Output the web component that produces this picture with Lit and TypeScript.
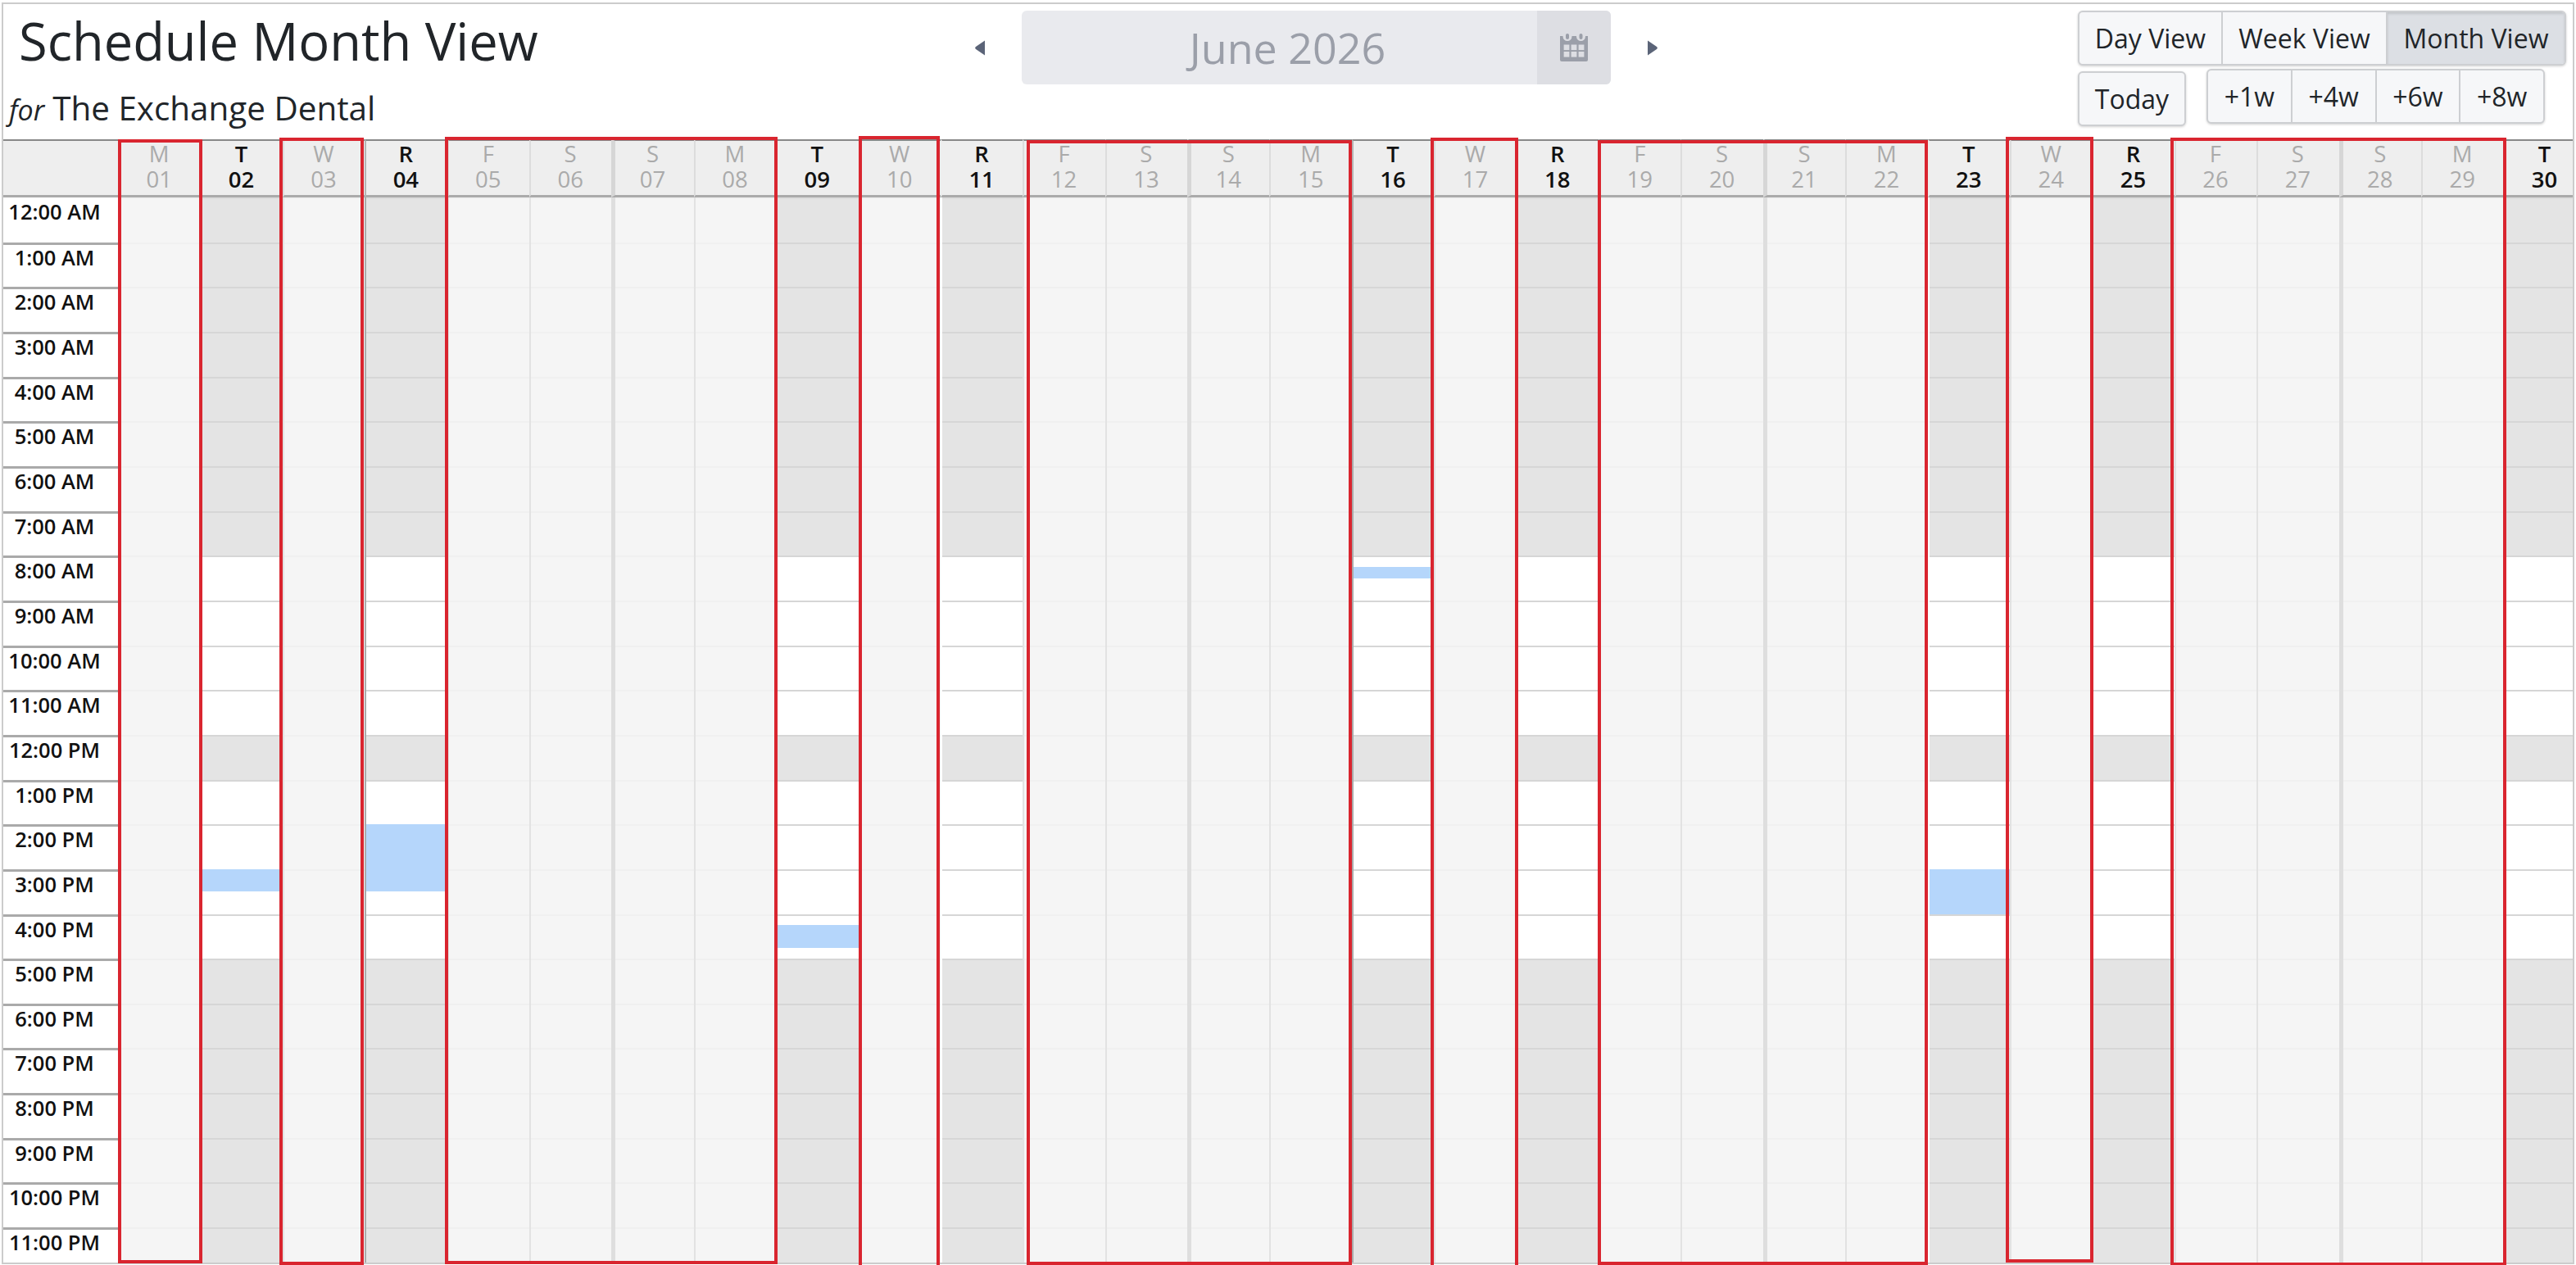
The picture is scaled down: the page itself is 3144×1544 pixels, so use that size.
import { LitElement, html, css, svg } from "lit";
import { customElement } from "lit/decorators.js";

const DAY_NAMES = ["M", "T", "W", "R", "F", "S", "S"];
const OPEN_LETTERS = new Set(["T", "R"]);
const GREY_HOURS = new Set([0, 1, 2, 3, 4, 5, 6, 7, 12, 17, 18, 19, 20, 21, 22, 23]);
const ROW_H = 54.67;
const DARK_LEFT = new Set([3, 15, 24, 29]);

const BLOCKS: Record<number, { start: number; len: number }> = {
  1: { start: 15, len: 0.5 },
  3: { start: 14, len: 1.5 },
  8: { start: 16.25, len: 0.5 },
  15: { start: 8.25, len: 0.25 },
  22: { start: 15, len: 1 },
};

const BOXES = [
  { l: 143.5, t: 170, r: 247, b: 1541.5 },
  { l: 341, t: 168, r: 443.5, b: 1543.5 },
  { l: 543, t: 166.5, r: 949, b: 1543 },
  { l: 1048, t: 166, r: 1147, b: 1548 },
  { l: 1253, t: 170.5, r: 1649.5, b: 1543.5 },
  { l: 1746, t: 167.5, r: 1853, b: 1548 },
  { l: 1949.5, t: 170.5, r: 2353.3, b: 1544 },
  { l: 2448, t: 166.5, r: 2555, b: 1541 },
  { l: 2649, t: 167.5, r: 3059, b: 1544.5 },
];

const hourLabel = (h: number) => {
  const twelve = h % 12 === 0 ? 12 : h % 12;
  return `${twelve}:00 ${h < 12 ? "AM" : "PM"}`;
};

const calendarIcon = svg`
  <path fill="#9b9fa9" d="M2 3h32a0 0 0 0 1 0 0v29a2 2 0 0 1-2 2H2a2 2 0 0 1-2-2V3a0 0 0 0 1 2 0z"/>
  <path fill="#dddee3" d="M3.5 0h11v3.5a5.5 5.5 0 0 1-11 0zM20 0h11v3.5a5.5 5.5 0 0 1-11 0z"/>
  <rect fill="#9b9fa9" x="7" y="0" width="4" height="7" rx="2"/>
  <rect fill="#9b9fa9" x="23.5" y="0" width="4" height="7" rx="2"/>
  <g fill="#dddee3">
    <rect x="4.6" y="13.5" width="6.8" height="6.6"/><rect x="13.6" y="13.5" width="6.8" height="6.6"/><rect x="22.6" y="13.5" width="6.8" height="6.6"/>
    <rect x="4.6" y="22" width="6.8" height="6.6"/><rect x="13.6" y="22" width="6.8" height="6.6"/><rect x="22.6" y="22" width="6.8" height="6.6"/>
  </g>`;

@customElement("app-root")
export class AppRoot extends LitElement {
  static styles = css`
    :host {
      display: block;
      position: relative;
      width: 3144px;
      height: 1544px;
      overflow: hidden;
      background: #fff;
      font-family: "Open Sans", "Noto Sans", sans-serif;
      color: #212529;
    }
    .frame {
      position: absolute;
      inset: 3px 2px 1px 2px;
      box-sizing: border-box;
      border: 2px solid #cccccc;
      overflow: hidden;
      display: flex;
      flex-direction: column;
    }
    .toolbar {
      flex: none;
      height: 165px;
      display: flex;
      align-items: flex-start;
    }
    .titles {
      flex: none;
      width: 1186px;
      box-sizing: border-box;
      padding: 0 0 0 6px;
    }
    h1 {
      margin: 0;
      padding: 0 0 0 13px;
      font-size: 63.2px;
      font-weight: 400;
      line-height: 90px;
      height: 99px;
      white-space: nowrap;
    }
    .sub {
      font-size: 40.4px;
      line-height: 56px;
      color: #212529;
      white-space: nowrap;
    }
    .sub i {
      font-size: 34px;
      font-weight: 400;
      margin-left: 1px;
      margin-right: 10px;
    }
    .nav {
      flex: none;
      display: flex;
      align-items: center;
      height: 90px;
      margin-top: 8px;
    }
    .arrow {
      flex: none;
      width: 12px;
      height: 19px;
      display: block;
    }
    .date {
      flex: none;
      width: 719px;
      height: 90px;
      margin: 0 45px;
      display: flex;
      background: #e9eaee;
      border-radius: 6px;
      overflow: hidden;
    }
    .date-text {
      flex: 1;
      text-align: center;
      padding-left: 20px;
      font-size: 52px;
      line-height: 90px;
      color: #9b9fa9;
    }
    .date-addon {
      flex: none;
      width: 90px;
      display: flex;
      align-items: center;
      justify-content: center;
      background: #dddee3;
    }
    .date-addon svg {
      width: 34px;
      height: 34px;
      display: block;
    }
    .controls {
      flex: none;
      margin-left: auto;
      margin-right: 8px;
      margin-top: 8px;
      width: 596px;
      display: flex;
      flex-direction: column;
    }
    .row2 {
      display: flex;
      align-items: flex-start;
      gap: 25px;
      margin-top: 4px;
    }
    .group {
      display: flex;
      height: 67px;
      box-sizing: border-box;
      border: 2px solid #cdcfd2;
      border-radius: 6px;
      background: #f6f7f9;
      box-shadow: 0 1px 3px rgba(0, 0, 0, 0.18);
      overflow: hidden;
    }
    .btn {
      display: flex;
      align-items: center;
      justify-content: center;
      font-size: 32px;
      color: #212529;
      box-sizing: border-box;
      white-space: nowrap;
    }
    .btn + .btn {
      border-left: 2px solid #cdcfd2;
    }
    .btn.active {
      background: #dcdfe4;
      box-shadow: inset 0 2px 3px rgba(0, 0, 0, 0.12);
    }
    .v1 { width: 173px; }
    .v2 { width: 201px; }
    .v3 { flex: 1; }
    .view { width: 100%; }
    .today {
      width: 132px;
      margin-top: 3px;
    }
    .today .btn { width: 100%; }
    .plus { width: 413px; }
    .plus .btn { flex: 1; }
    .calendar {
      flex: 1;
      display: flex;
      min-height: 0;
    }
    .times {
      flex: none;
      width: 140px;
      background: #fff;
    }
    .corner {
      height: 71px;
      box-sizing: border-box;
      background: #eeeeee;
      border-top: 2px solid #888888;
      border-bottom: 3px solid #aaaaaa;
    }
    .time {
      height: 54.67px;
      box-sizing: border-box;
      padding-right: 15px;
      border-top: 3px solid #aaaaaa;
      text-align: center;
      font-size: 25.5px;
      font-weight: 560;
      line-height: 30px;
      color: #111;
      white-space: nowrap;
    }
    .corner + .time {
      border-top-color: transparent;
      line-height: 28px;
    }
    .day {
      flex: none;
      width: 100.4px;
      box-sizing: border-box;
      display: flex;
      flex-direction: column;
    }
    .head {
      height: 71px;
      flex: none;
      box-sizing: border-box;
      background: #eeeeee;
      border-top: 2px solid #888888;
      border-bottom: 3px solid #aaaaaa;
      border-left: 2px solid #eeeeee;
      text-align: center;
      font-size: 27.5px;
      line-height: 31px;
      padding-top: 0;
      padding-right: 2px;
      font-weight: 570;
      color: #111;
    }
    .head span { display: block; }
    .closed .head {
      font-weight: 400;
      color: #aaaaaa;
      border-left-color: #dcdcdc;
    }
    .thick .head {
      border-left-width: 5px;
      border-left-color: #d6d6d6;
      padding-right: 5px;
    }
    .grid {
      position: relative;
      flex: 1;
      border-left: 2px solid transparent;
    }
    .closed .grid { border-left-color: #e2e2e2; background: #f5f5f5; }
    .thick .grid { border-left-width: 5px; border-left-color: #dedede; }
    .dark .grid { border-left-color: #aaaaaa; }
    .dark .head { border-left-color: #b5b5b5; }
    .cell {
      height: 54.67px;
      box-sizing: border-box;
      border-top: 2px solid #d6d6d6;
      background: #fff;
    }
    .cell.grey { background: #e4e4e4; border-top-color: #d6d6d6; }
    .cell.first { border-top-color: #dcdcdc; }
    .closed .cell { background: #f5f5f5; border-top-color: #f0f0f0; }
    .block {
      position: absolute;
      left: 0;
      right: 0;
      background: #b5d6fb;
    }
    .box {
      position: absolute;
      box-sizing: border-box;
      border: 4px solid #d9252f;
      pointer-events: none;
    }
  `;

  private renderDay(i: number) {
    const letter = DAY_NAMES[i % 7];
    const open = OPEN_LETTERS.has(letter);
    const classes = ["day", open ? "open" : "closed"];
    if (letter === "S" && i % 7 === 6) classes.push("thick");
    if (DARK_LEFT.has(i)) classes.push("dark");
    const block = BLOCKS[i];
    return html`<div class=${classes.join(" ")}>
      <div class="head">
        <span>${letter}</span><span>${String(i + 1).padStart(2, "0")}</span>
      </div>
      <div class="grid">
        ${Array.from({ length: 24 }, (_, h) => {
          const cls = `cell ${GREY_HOURS.has(h) ? "grey" : ""} ${h === 0 ? "first" : ""}`;
          return html`<div class=${cls}></div>`;
        })}
        ${block
          ? html`<div
              class="block"
              style="top:${block.start * ROW_H}px;height:${block.len * ROW_H}px"
            ></div>`
          : null}
      </div>
    </div>`;
  }

  render() {
    return html`
      <div class="frame">
        <div class="toolbar">
          <div class="titles">
            <h1>Schedule Month View</h1>
            <div class="sub"><i>for</i>The Exchange Dental</div>
          </div>
          <div class="nav">
            <svg class="arrow" viewBox="0 0 12 19">
              <path fill="#5b6478" d="M12 0.5v18L1 11a2 2 0 0 1 0-3z" />
            </svg>
            <div class="date">
              <div class="date-text">June 2026</div>
              <div class="date-addon"><svg viewBox="0 0 34 34">${calendarIcon}</svg></div>
            </div>
            <svg class="arrow" viewBox="0 0 12 19">
              <path fill="#5b6478" d="M0 0.5v18L11 11a2 2 0 0 0 0-3z" />
            </svg>
          </div>
          <div class="controls">
            <div class="group view">
              <div class="btn v1">Day View</div>
              <div class="btn v2">Week View</div>
              <div class="btn v3 active">Month View</div>
            </div>
            <div class="row2">
              <div class="group today"><div class="btn">Today</div></div>
              <div class="group plus">
                <div class="btn">+1w</div>
                <div class="btn">+4w</div>
                <div class="btn">+6w</div>
                <div class="btn">+8w</div>
              </div>
            </div>
          </div>
        </div>
        <div class="calendar">
          <div class="times">
            <div class="corner"></div>
            ${Array.from({ length: 24 }, (_, h) => html`<div class="time">${hourLabel(h)}</div>`)}
          </div>
          ${Array.from({ length: 30 }, (_, i) => this.renderDay(i))}
        </div>
      </div>
      ${BOXES.map(
        (b) => html`<div
          class="box"
          style="left:${b.l}px;top:${b.t}px;width:${b.r - b.l}px;height:${b.b - b.t}px"
        ></div>`,
      )}
    `;
  }
}
